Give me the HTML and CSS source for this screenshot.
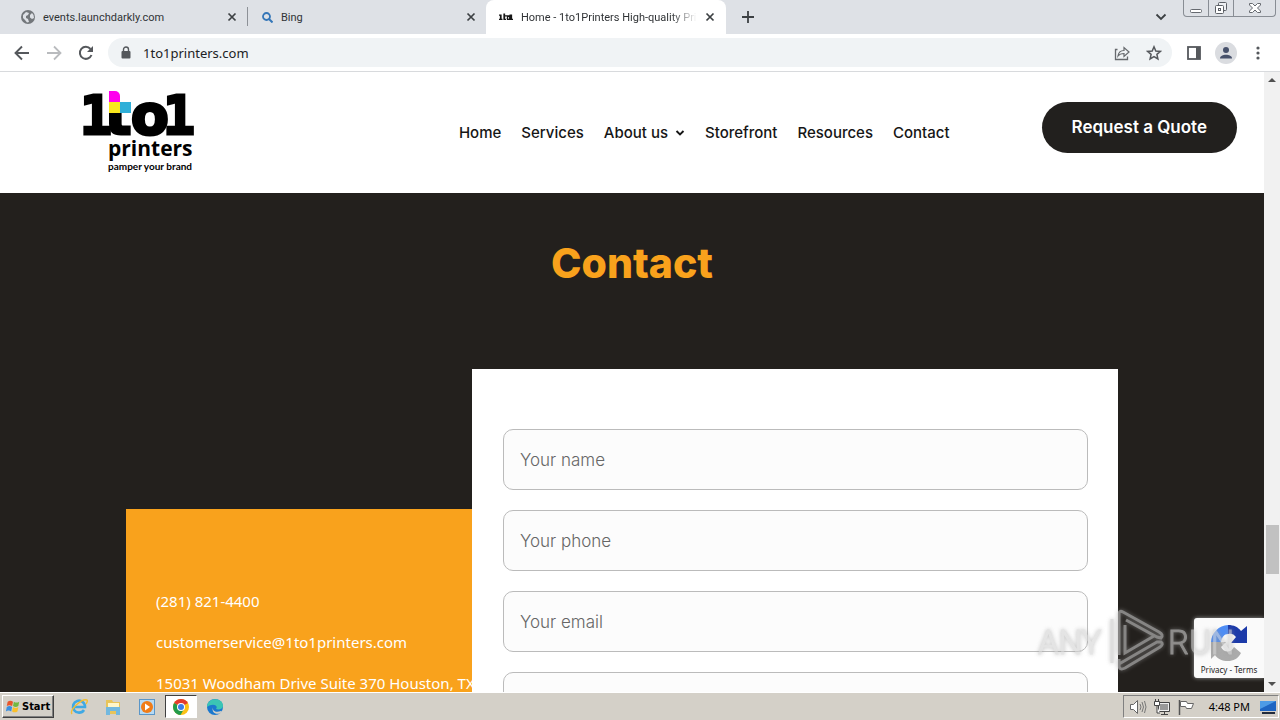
FILE: index.html
```html
<!DOCTYPE html>
<html lang="en">
<head>
<meta charset="utf-8">
<meta name="viewport" content="width=device-width, initial-scale=1">
<title>Home - 1to1Printers High-quality Printing</title>
<link rel="stylesheet" href="styles.css">
</head>
<body>
<div class="tabstrip">
  <div class="tab">
    <svg class="favicon" viewBox="0 0 14 14"><circle cx="7" cy="7" r="7" fill="#73777b"/><path d="M2 5l3-3 3 1-1 2-2 1v2l2 1 1 3-2 .5L4 10 2 8zM9 5l2-2 1.500 2L13 8l-2 1-2-1.500z" fill="#dee1e6"/></svg>
    <span class="tab-title">events.launchdarkly.com</span>
    <button class="tab-close" aria-label="Close tab"><svg viewBox="0 0 10 10"><path d="M1.500 1.500l7 7M8.500 1.500l-7 7" stroke="#3c4043" stroke-width="1.700"/></svg></button>
  </div>
  <div class="tab tab-second">
    <svg class="favicon favicon-small" viewBox="0 0 11 11"><circle cx="4.500" cy="4.500" r="3.500" fill="none" stroke="#3476b8" stroke-width="1.800"/><path d="M7 7l3.500 3.500" stroke="#3476b8" stroke-width="2"/></svg>
    <span class="tab-title">Bing</span>
    <button class="tab-close" aria-label="Close tab"><svg viewBox="0 0 10 10"><path d="M1.500 1.500l7 7M8.500 1.500l-7 7" stroke="#3c4043" stroke-width="1.700"/></svg></button>
  </div>
  <div class="tab tab-active">
    <svg class="favicon favicon-logo" viewBox="0 0 16 8"><path d="M0 1h3v5h1v1.500H0V6h1V2.500H0zM5 0h2v2h2v1.500H7V6h2v1.500H5zM9 2h4v5.500H9zM12 1h3v5h1v1.500h-4z" fill="#161616"/><path d="M10.500 4h1v2h-1z" fill="#fff"/></svg>
    <span class="tab-title tab-title-fade">Home - 1to1Printers High-quality Printing</span>
    <button class="tab-close" aria-label="Close tab"><svg viewBox="0 0 10 10"><path d="M1.500 1.500l7 7M8.500 1.500l-7 7" stroke="#3c4043" stroke-width="1.700"/></svg></button>
  </div>
  <button class="new-tab" aria-label="New tab"><svg viewBox="0 0 12 12"><path d="M6 0v12M0 6h12" stroke="#3c4043" stroke-width="1.800"/></svg></button>
  <button class="tab-search" aria-label="Search tabs"><svg viewBox="0 0 12 12"><path d="M1.500 3.500L6 8l4.500-4.500" fill="none" stroke="#3c4043" stroke-width="1.800"/></svg></button>
  <div class="window-controls">
    <button aria-label="Minimize"><svg viewBox="0 0 14 14"><rect x="1.500" y="8.500" width="11" height="3" rx="1" fill="#fff" stroke="#666a70"/></svg></button>
    <button aria-label="Restore"><svg viewBox="0 0 14 14"><rect x="4.500" y="1.500" width="8" height="8" rx="1" fill="#eef0f3" stroke="#5c6066"/><rect x="1.500" y="4.500" width="8" height="8" rx="1" fill="#fff" stroke="#5c6066"/><rect x="4.500" y="7.500" width="2" height="2" fill="none" stroke="#5c6066"/></svg></button>
    <button class="window-close" aria-label="Close"><svg viewBox="0 0 14 14"><path d="M1.500 2.500h3L7 5l2.500-2.500h3V4L9.500 7l3 3v1.500h-3L7 9l-2.500 2.500h-3V10l3-3-3-3z" fill="#fff" stroke="#666a70"/></svg></button>
  </div>
</div>

<div class="toolbar">
  <button class="tool" aria-label="Back"><svg viewBox="0 0 16 16"><path d="M15 8H2M8 1.500L1.500 8 8 14.500" fill="none" stroke="#55585c" stroke-width="1.900"/></svg></button>
  <button class="tool" aria-label="Forward"><svg viewBox="0 0 16 16"><path d="M1 8h13M8 1.500L14.500 8 8 14.500" fill="none" stroke="#b9bbbe" stroke-width="1.800"/></svg></button>
  <button class="tool" aria-label="Reload"><svg viewBox="0 0 16 16"><path d="M13.500 10A6 6 0 1 1 12.500 4" fill="none" stroke="#55585c" stroke-width="2"/><path d="M15 1v6H9z" fill="#55585c"/></svg></button>
  <div class="omnibox">
    <svg class="lock" viewBox="0 0 10 13"><rect x="0.500" y="5" width="9" height="7.500" rx="1" fill="#55585c"/><path d="M2.500 5V3.500a2.500 2.500 0 0 1 5 0V5" fill="none" stroke="#55585c" stroke-width="1.400"/></svg>
    <input class="address" aria-label="Address" value="1to1printers.com">
    <button class="tool" aria-label="Share"><svg viewBox="0 0 16 16"><path d="M3.500 4.500h-2v10h12v-3" fill="none" stroke="#66696d" stroke-width="1.300"/><path d="M4 11c.5-4 2.500-5.500 6-5.500V2.500l5 4.500-5 4.500v-3C7.500 8.500 5.500 9 4 11z" fill="none" stroke="#66696d" stroke-width="1.200"/></svg></button>
    <button class="tool" aria-label="Bookmark"><svg viewBox="0 0 16 16"><path d="M8 1.800l1.800 4.200 4.600.4-3.500 3 1 4.600L8 11.600 4.100 14l1-4.600-3.500-3L6.200 6z" fill="none" stroke="#55585c" stroke-width="1.500"/></svg></button>
  </div>
  <button class="tool" aria-label="Side panel"><svg viewBox="0 0 16 16"><rect x="2" y="2" width="12" height="12" fill="none" stroke="#55585c" stroke-width="1.800"/><path d="M10 2h4v12h-4z" fill="#55585c"/></svg></button>
  <button class="profile" aria-label="Profile"><svg viewBox="0 0 22 22"><circle cx="11" cy="11" r="11" fill="#dadce0"/><circle cx="11" cy="8" r="3" fill="#47516b"/><path d="M5 16.500c0-5 12-5 12 0z" fill="#47516b"/></svg></button>
  <button class="tool" aria-label="Menu"><svg viewBox="0 0 16 16"><g fill="#55585c"><circle cx="8" cy="3" r="1.600"/><circle cx="8" cy="8" r="1.600"/><circle cx="8" cy="13" r="1.600"/></g></svg></button>
</div>

<div class="viewport">
  <div class="page">
    <header class="site-header">
      <a class="logo" href="#" aria-label="1to1 printers, pamper your brand">
        <svg viewBox="0 0 112 84">
          <defs><clipPath id="t-base"><rect x="26" y="22" width="25" height="24"/></clipPath></defs>
          <text class="logo-one" x="-3" y="43">1</text>
          <g clip-path="url(#t-base)"><text class="logo-round" x="22" y="43">t</text></g>
          <text class="logo-round" x="48" y="43">o</text>
          <text class="logo-one" x="80" y="43">1</text>
          <path d="M26 0h6a5 5 0 0 1 5 5v6H26z" fill="#f0e"/>
          <path d="M26 11h11v11H26z" fill="#f9e71d"/>
          <path d="M37 11h11v11H37z" fill="#2fafd8"/>
          <text class="logo-name" x="25" y="65">printers</text>
          <text class="logo-tag" x="25" y="79">pamper your brand</text>
        </svg>
      </a>
      <nav class="nav">
        <a href="#">Home</a>
        <a href="#">Services</a>
        <a href="#">About us <svg class="caret" viewBox="0 0 10 8"><path d="M1.500 2L5 5.500 8.500 2" fill="none" stroke="#161616" stroke-width="1.900"/></svg></a>
        <a href="#">Storefront</a>
        <a href="#">Resources</a>
        <a href="#">Contact</a>
      </nav>
      <a class="quote" href="#">Request a Quote</a>
    </header>

    <main class="contact">
      <h1>Contact</h1>
      <div class="contact-grid">
        <address class="details">
          <a href="#">(281) 821-4400</a>
          <a href="#">customerservice@1to1printers.com</a>
          <span>15031 Woodham Drive Suite 370 Houston, TX</span>
        </address>
        <form class="form">
          <input type="text" aria-label="Your name" placeholder="Your name">
          <input type="tel" aria-label="Your phone" placeholder="Your phone">
          <input type="email" aria-label="Your email" placeholder="Your email">
          <input type="text" aria-label="Message">
        </form>
      </div>
    </main>

    <div class="recaptcha">
      <svg viewBox="0 0 40 40"><path d="M2 19A18 18 0 0 1 19 2v9c-4 0-6 3-7 8z" fill="#4e8df5"/><path d="M19 2c6 0 10 2 13 6l6-5v17H22l5-6c-2-3-5-4-8-3z" fill="#1c3aa9"/><path d="M2 19h15l-5 5c3 6 10 6 13 0l7 6c-3 6-8 8-13 8-6 0-10-2-13-6l-4 4z" fill="#ababab"/></svg>
      <div><a href="#">Privacy</a> - <a href="#">Terms</a></div>
    </div>
  </div>
  <div class="scrollbar" aria-hidden="true">
    <svg viewBox="0 0 16 16"><path d="M4 10l4-4 4 4z" fill="#505050"/></svg>
    <div class="track"><div class="thumb"></div></div>
    <svg viewBox="0 0 16 16"><path d="M4 6l4 4 4-4z" fill="#505050"/></svg>
  </div>
</div>

<svg class="watermark" viewBox="0 0 200 64" aria-hidden="true">
  <g class="watermark-text"><text x="2" y="45">ANY</text><text x="132" y="45">RUN</text></g>
  <path d="M83 46V5q0-4 4-2l36 20q5 3 2 6l-4-1L90 11M89 16v28l29-17M76 10v44M83 50v6q0 6 6 3l35-21q4-3 1-5l-4 0-38 22" />
</svg>

<footer class="taskbar">
  <button class="start"><svg viewBox="0 0 18 16"><path d="M3 2q3-2 6 0L8 7Q5 5 2 7z" fill="#e8562b"/><path d="M10 2q3 2 6 0l-1 5q-3 2-6 0z" fill="#72b840"/><path d="M2 8q3-2 6 0l-1 5q-3-2-6 0z" fill="#3a8fe0"/><path d="M9 8q3 2 6 0l-1 5q-3 2-6 0z" fill="#fbc02a"/></svg>Start</button>
  <div class="quick">
    <button aria-label="Internet Explorer"><svg viewBox="0 0 18 18"><path d="M14 12A6 6 0 1 1 15 9H4" fill="none" stroke="#3fa9e4" stroke-width="2.600"/><path d="M2 16C-1 12 12 0 17 2q1 1-1 4" fill="none" stroke="#f2bd32" stroke-width="1.400"/></svg></button>
    <button aria-label="Explorer"><svg viewBox="0 0 18 18"><path d="M2 2h6l1 2h7v12H2z" fill="#e8c45a"/><path d="M4 5h11v4H4z" fill="#fff6c9"/><path d="M2 9h14v8h-4v-4H6v4H2z" fill="#72b8df"/></svg></button>
    <button aria-label="Media Player"><svg viewBox="0 0 18 18"><rect x="1.500" y="1.500" width="15" height="15" fill="#b6daf4" stroke="#5a96c8"/><circle cx="9" cy="9" r="6" fill="#f07c18"/><path d="M7 5.500l5 3.500-5 3.500z" fill="#fff"/></svg></button>
    <button class="running" aria-label="Chrome"><svg viewBox="0 0 18 18"><circle cx="9" cy="9" r="8" fill="#fbc116"/><path d="M9 9L2.100 5A8 8 0 0 1 15.900 5z" fill="#e33b2e"/><path d="M9 9L2.100 5A8 8 0 0 0 8.500 17l3.500-6z" fill="#229b4b"/><circle cx="9" cy="9" r="4" fill="#fff"/><circle cx="9" cy="9" r="3" fill="#3b7de8"/></svg></button>
    <button aria-label="Edge"><svg viewBox="0 0 18 18"><circle cx="9" cy="9" r="8" fill="#1b78ce"/><path d="M1 9C1-1 17-1 17 8c0 3-4 4-7 3 3-4-4-6-9-2z" fill="#3bc5b4"/><path d="M7 9c-1 4 3 6 8 4l1 1c-5 4-11 1-9-5z" fill="#d4d0c8"/></svg></button>
  </div>
  <div class="tray">
    <svg viewBox="0 0 18 18"><path d="M1.500 6.500h3l4-4v13l-4-4h-3z" fill="#fff" stroke="#666"/><path d="M11 6q2 3 0 6M13 4q3 5 0 10M15.500 3q3 6 0 12" fill="none" stroke="#777"/></svg>
    <svg viewBox="0 0 18 18"><path d="M5.500 4.500h11v9h-11zM8 16.500h7M11.500 14v2" fill="#eee" stroke="#444"/><path d="M7 6h8v6H7z" fill="#999"/><path d="M1.500 3.500h5v4h-5zM2.500 1v2M5.500 1v2M4 8v7h3" fill="#fff" stroke="#444"/></svg>
    <svg viewBox="0 0 18 18"><path d="M2.500 17V2" stroke="#555" stroke-width="1.500"/><path d="M3.500 3.500h6l1 2h6l-2 5h-5l-1-2h-5z" fill="#fff" stroke="#666"/></svg>
    <time>4:48 PM</time>
    <svg viewBox="0 0 18 18"><path d="M1 3h16v10H1z" fill="#1e65c2"/><path d="M1 3h16L1 11z" fill="#4d9be6"/><path d="M3 14h13v2H3z" fill="#222c3c"/></svg>
  </div>
</footer>
</body>
</html>
```
FILE: styles.css
```css
* { box-sizing: border-box; }

body {
  margin: 0;
  height: 100vh;
  display: flex;
  flex-direction: column;
  overflow: hidden;
  position: relative;
  font-family: "Noto Sans", sans-serif;
  background: #fff;
}

a { color: inherit; text-decoration: none; }
svg { display: block; flex: none; }
button {
  border: 0;
  padding: 0;
  margin: 0;
  background: none;
  font: inherit;
  color: inherit;
  display: flex;
  align-items: center;
  justify-content: center;
}

/* Browser tabs */
.tabstrip {
  height: 34px;
  flex: none;
  display: flex;
  align-items: stretch;
  background: #dee1e6;
  color: #303336;
  font-family: Roboto, sans-serif;
  font-size: 11px;
}
.tab {
  width: 240px;
  display: flex;
  align-items: center;
  gap: 8px;
  padding: 0 10px 0 13px;
}
.tab:first-child { width: 248px; padding: 0 10px 0 21px; border-right: 1px solid #dee1e6; border-image: linear-gradient(#dee1e6 22%, #8d9197 22% 76%, #dee1e6 76%) 1; }
.tab-second { width: 238px; padding-left: 14px; padding-right: 10px; }
.tab-active { background: #fff; border-radius: 8px 8px 0 0; padding-right: 11px; }
.favicon { width: 14px; height: 14px; }
.favicon-small { width: 11px; height: 11px; }
.favicon-logo { width: 14px; height: 8px; }
.tab-title { flex: 1; overflow: hidden; white-space: nowrap; }
.tab-title-fade { mask-image: linear-gradient(90deg, #000 85%, transparent); }
.tab-close svg { width: 10px; height: 10px; }
.new-tab { width: 44px; }
.new-tab svg, .tab-search svg { width: 12px; height: 12px; }
.tab-search { margin-left: auto; margin-right: 16px; }
.window-controls {
  display: flex;
  height: 17px;
  margin-right: 4px;
  border: 1px solid #888d94;
  border-top: 0;
  border-radius: 0 0 4px 4px;
}
.window-controls button { width: 25px; border-right: 1px solid #888d94; }
.window-controls .window-close { width: 41px; border-right: 0; }
.window-controls svg { width: 14px; height: 14px; }

/* Address row */
.toolbar {
  height: 38px;
  flex: none;
  display: flex;
  align-items: center;
  gap: 16px;
  padding: 0 14px;
  border-bottom: 1px solid #d8dadd;
}
.tool svg { width: 16px; height: 16px; }
.profile svg { width: 22px; height: 22px; }
.toolbar > .profile { margin: 0 -3px; }
.omnibox {
  flex: 1;
  height: 29px;
  display: flex;
  align-items: center;
  gap: 16px;
  padding: 0 10px 0 13px;
  margin-left: -2px;
  margin-right: -2px;
  border-radius: 15px;
  background: #f0f3f5;
}
.lock { width: 10px; height: 13px; }
.address {
  flex: 1;
  min-width: 0;
  border: 0;
  padding: 0;
  margin-left: -4px;
  background: none;
  color: #202124;
  font-family: "Noto Sans", sans-serif;
  font-size: 13px;
}

/* Web page area */
.viewport { flex: 1; min-height: 0; display: flex; }
.page {
  flex: 1;
  min-width: 0;
  display: flex;
  flex-direction: column;
  overflow: hidden;
  position: relative;
}
.site-header {
  flex: none;
  display: grid;
  grid-template-columns: 1fr auto auto;
  column-gap: 92px;
  align-items: center;
  min-height: 121px;
  padding: 0 27px 0 83px;
  color: #161616;
  font-family: Inter, sans-serif;
}
.logo { justify-self: start; }
.logo svg { width: 112px; height: 84px; overflow: visible; }
.logo-one, .logo-round { fill: #000; stroke: #000; stroke-width: 3; }
.logo-one { font: 700 53px "DejaVu Sans Mono", monospace; }
.logo-round { font: 700 55px "DejaVu Sans", sans-serif; }
.logo-name { font: 700 21px "Open Sans", sans-serif; fill: #000; }
.logo-tag { font: 700 10px Lato, sans-serif; fill: #000; }
.nav { display: flex; gap: 20px; font-size: 15px; font-weight: 500; }
.nav a { display: flex; align-items: center; gap: 7px; }
.caret { width: 10px; height: 8px; }
.quote {
  align-self: start;
  margin-top: 30px;
  padding: 0 30px;
  border-radius: 26px;
  background: #22201e;
  color: #fff;
  font-size: 17px;
  font-weight: 600;
  line-height: 51px;
}

.contact { flex: 1; display: flex; flex-direction: column; background: #23201d; }
.contact h1 {
  margin: 0;
  padding: 40px 0 76px;
  text-align: center;
  color: #f9a21c;
  font: 800 41px/60px Inter, sans-serif;
}
.contact-grid {
  flex: 1;
  display: grid;
  grid-template-columns: 346fr 646fr;
  padding: 0 146px 0 126px;
}
.details {
  display: flex;
  flex-direction: column;
  gap: 16px;
  min-width: 0;
  margin-top: 140px;
  padding: 80px 0 0 30px;
  overflow: hidden;
  background: #f9a21c;
  color: #fff;
  font-size: 15px;
  font-style: normal;
  line-height: 25px;
  white-space: nowrap;
}
.form {
  display: flex;
  flex-direction: column;
  gap: 20px;
  padding: 60px 30px 0 31px;
  background: #fff;
}
.form input {
  flex: none;
  width: 100%;
  height: 61px;
  padding: 0 16px;
  border: 1px solid #bbb;
  border-radius: 10px;
  background: #fcfcfc;
  color: #444;
  font: 300 17px Inter, sans-serif;
}
.form input::placeholder { color: #666; }

.recaptcha {
  position: absolute;
  right: 0;
  bottom: 14px;
  width: 70px;
  height: 60px;
  display: flex;
  flex-direction: column;
  align-items: center;
  justify-content: space-between;
  padding: 5px 0 2px;
  border-radius: 3px 0 0 3px;
  background: #fafafa;
  box-shadow: 0 0 4px #999;
  color: #222;
  font-size: 8px;
  line-height: 12px;
}
.recaptcha svg { width: 40px; height: 40px; }

.scrollbar { flex: none; width: 16px; display: flex; flex-direction: column; background: #f1f1f1; }
.track { flex: 1; display: grid; grid-template-rows: 437fr 49fr 102fr; padding: 0 1px 0 2px; }
.thumb { grid-row: 2; background: #c1c1c1; }

.watermark {
  position: absolute;
  right: 44px;
  bottom: 47px;
  width: 200px;
  height: 64px;
  opacity: 0.6;
  fill: none;
  stroke: #c9c9c9;
  stroke-width: 3;
  filter: drop-shadow(0 0 2px #999);
  pointer-events: none;
}
.watermark-text { font: 300 33px Roboto, sans-serif; fill: #d5d5d5; stroke: #d5d5d5; stroke-width: 1; }

/* Desktop taskbar */
.taskbar {
  flex: none;
  height: 28px;
  display: flex;
  align-items: center;
  padding: 0 1px 0 2px;
  border-top: 1px solid #fff;
  background: #d4d0c8;
  color: #000;
  font-size: 11px;
}
.start {
  height: 23px;
  padding: 0 3px 0 2px;
  gap: 1px;
  border: 1px solid;
  border-color: #fff #404040 #404040 #fff;
  box-shadow: inset -1px -1px #808080;
  font-family: "DejaVu Sans Condensed", "DejaVu Sans", sans-serif;
  font-weight: 700;
}
.start svg { width: 16px; height: 16px; }
.quick { display: flex; gap: 2px; margin-left: 9px; }
.quick button { width: 32px; height: 23px; }
.quick svg { width: 18px; height: 18px; }
.quick .running { background: #fff; border: 1px solid; border-color: #404040 #fff #fff #404040; }
.tray {
  display: flex;
  align-items: center;
  gap: 6px;
  height: 23px;
  margin-left: auto;
  padding: 0 1px 0 5px;
  border: 1px solid;
  border-color: #808080 #fff #fff #808080;
}
.tray svg { width: 18px; height: 18px; }
.tray time { margin: 0 3px 0 8px; }
```
